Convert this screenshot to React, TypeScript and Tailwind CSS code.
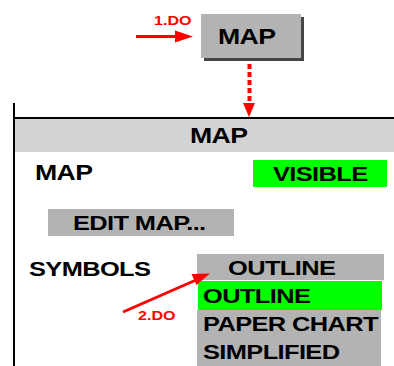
import React from 'react';

const txt = "font-bold text-black tracking-[-0.5px]";

function Wide({ children, className = '' }: { children: React.ReactNode; className?: string }) {
  // glyphs in the mockup are wider than Arial, so stretch them a bit
  return <span className={`inline-block origin-left scale-x-[1.24] whitespace-nowrap ${className}`}>{children}</span>;
}

export default function App() {
  return (
    <div className="relative w-[394px] h-[366px] overflow-hidden bg-white font-['Liberation_Sans',Arial,sans-serif]">
      {/* Top button */}
      <div className="h-[103px] pt-[14px] pl-[201px]">
        <div className="w-[100px] h-[44px] bg-[#b3b3b3] shadow-[3px_3px_0_#454545] flex items-center pl-[17px] pt-[3px]">
          <Wide className={`${txt} text-[21.5px] leading-none`}>MAP</Wide>
        </div>
      </div>

      {/* Panel */}
      <div className="ml-[13px] border-l-2 border-black pt-[14px] flex flex-col h-[263px]">
        <div className="border-t-2 border-black" />
        <div className="h-[33px] bg-[#d3d3d3] flex items-center pl-[175px] pt-[2px]">
          <Wide className={`${txt} text-[21.5px] leading-none`}>MAP</Wide>
        </div>

        {/* MAP visible row */}
        <div className="mt-[8px] h-[27px] flex items-center">
          <div className="flex-1 pl-[20px] pt-[3px]">
            <Wide className={`${txt} text-[21.5px] leading-none`}>MAP</Wide>
          </div>
          <div className="w-[134px] h-[27px] mr-[7px] bg-[#00ff00] flex items-center pl-[20px] pt-[2px]">
            <Wide className={`${txt} text-[20.5px] leading-none`}>VISIBLE</Wide>
          </div>
        </div>

        {/* Edit map */}
        <div className="mt-[22px] ml-[33px] w-[186px] h-[27px] bg-[#b3b3b3] flex items-center pl-[25px] pt-[2px]">
          <Wide className={`${txt} text-[20.5px] leading-none`}>EDIT MAP...</Wide>
        </div>

        {/* Symbols */}
        <div className="mt-[18px] flex items-start">
          <div className="w-[182px] h-[26px] flex items-center pl-[14px] pt-[4px]">
            <Wide className={`${txt} text-[20.5px] leading-none`}>SYMBOLS</Wide>
          </div>
          <div className="flex flex-col">
            <div className="w-[187px] h-[26px] bg-[#b3b3b3] flex items-center pl-[31px] pt-[3px]">
              <Wide className={`${txt} text-[20.5px] leading-none`}>OUTLINE</Wide>
            </div>
            <div className="mt-px ml-px w-[184px] h-[29px] bg-[#00ff00] flex items-center pl-[5px] pt-[2px]">
              <Wide className={`${txt} text-[20.5px] leading-none`}>OUTLINE</Wide>
            </div>
            <div className="w-[184px] bg-[#b3b3b3] flex flex-col">
              <div className="h-[26px] flex items-center pl-[6px] pt-[2px]">
                <Wide className={`${txt} text-[20.5px] leading-none`}>PAPER CHART</Wide>
              </div>
              <div className="h-[30px] flex items-center pl-[6px] pt-[2px]">
                <Wide className={`${txt} text-[20.5px] leading-none`}>SIMPLIFIED</Wide>
              </div>
            </div>
          </div>
        </div>
      </div>

      {/* Annotations */}
      <Wide className="absolute left-[154px] top-[14px] text-[13px] leading-none font-bold text-[#ff0000]">1.DO</Wide>
      <Wide className="absolute left-[138px] top-[309px] text-[13px] leading-none font-bold text-[#ff0000]">2.DO</Wide>
      <svg className="absolute inset-0 pointer-events-none" width="394" height="366" viewBox="0 0 394 366">
        <line x1="136" y1="36.5" x2="178" y2="36.5" stroke="#ff0000" strokeWidth="3" />
        <polygon points="193,36.5 175,30.5 175,42.5" fill="#ff0000" />
        <line x1="249.5" y1="64" x2="249.5" y2="105" stroke="#ff0000" strokeWidth="4" strokeDasharray="5 3" />
        <polygon points="249,117 243,103 255,103" fill="#ff0000" />
        <line x1="123" y1="312" x2="196" y2="280" stroke="#ff0000" strokeWidth="3" />
        <polygon points="210,273.5 196.5,285 191.5,274" fill="#ff0000" />
      </svg>
    </div>
  );
}
